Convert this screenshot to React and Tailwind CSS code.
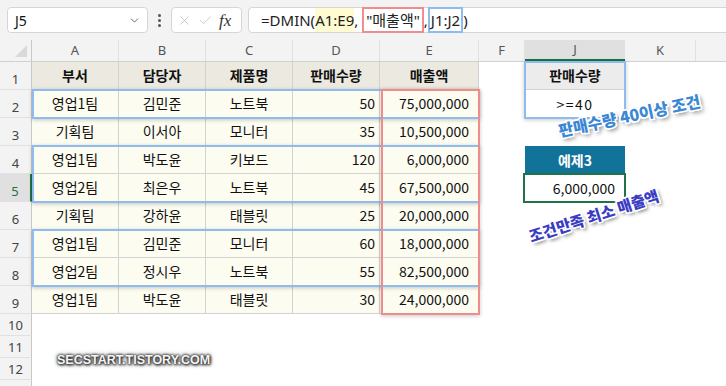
import React from 'react';
import { X, Check, ChevronDown } from 'lucide-react';

const cols = [
  { k: 'A', w: 'w-[87px]' },
  { k: 'B', w: 'w-[87px]' },
  { k: 'C', w: 'w-[87px]' },
  { k: 'D', w: 'w-[87px]' },
  { k: 'E', w: 'w-[99px]' },
];

const head = ['부서', '담당자', '제품명', '판매수량', '매출액'];

const rows = [
  ['영업1팀', '김민준', '노트북', '50', '75,000,000'],
  ['기획팀', '이서아', '모니터', '35', '10,500,000'],
  ['영업1팀', '박도윤', '키보드', '120', '6,000,000'],
  ['영업2팀', '최은우', '노트북', '45', '67,500,000'],
  ['기획팀', '강하윤', '태블릿', '25', '20,000,000'],
  ['영업1팀', '김민준', '모니터', '60', '18,000,000'],
  ['영업2팀', '정시우', '노트북', '55', '82,500,000'],
  ['영업1팀', '박도윤', '태블릿', '30', '24,000,000'],
];

const font = "font-['Noto_Sans_CJK_KR',sans-serif]";

const RowHead = ({ n, h, active }) => (
  <div
    className={`w-[32px] shrink-0 ${h} flex items-end justify-center pb-[3px] text-[13px] leading-none font-['Noto_Sans',sans-serif] border-b border-[#e1e1e1] ${
      active
        ? 'bg-[#e0e0e0] text-[#1e7145] border-r-2 border-r-[#1e7145]'
        : 'bg-[#f3f3f3] text-[#444] border-r border-r-[#c8c8c8]'
    }`}
  >
    {n}
  </div>
);

const JCell = ({ i }) => {
  if (i === 0)
    return (
      <div className="w-[100px] shrink-0 flex items-center justify-center bg-[#ececec] font-bold border-b border-[#d4d4d4]">
        판매수량
      </div>
    );
  if (i === 1)
    return <div className="w-[100px] shrink-0 flex items-center justify-center bg-white tracking-[1.5px]">&gt;=40</div>;
  if (i === 3)
    return (
      <div className="w-[100px] shrink-0 flex items-center justify-center bg-[#11739a] text-white font-bold">
        예제3
      </div>
    );
  if (i === 4)
    return <div className="w-[100px] shrink-0 flex items-center justify-end pr-[10px] bg-white">6,000,000</div>;
  return <div className="w-[100px] shrink-0" />;
};

export default function App() {
  return (
    <div className={`relative w-[726px] h-[386px] overflow-hidden bg-white text-[14px] text-[#111] ${font}`}>
      {/* formula bar */}
      <div className="h-[40px] bg-[#f3f3f3] flex items-center pl-[7px]">
        <div className="w-[141px] h-[26px] shrink-0 bg-white border border-[#d6d6d6] rounded-[4px] flex items-center justify-between pl-[7px] pr-[6px] font-['Noto_Sans',sans-serif] text-[14px]">
          J5
          <ChevronDown size={13} strokeWidth={1.6} className="text-[#555]" />
        </div>
        <div className="w-[23px] shrink-0 flex flex-col items-center gap-[2px]">
          <span className="w-[3px] h-[3px] rounded-full bg-[#555]" />
          <span className="w-[3px] h-[3px] rounded-full bg-[#555]" />
          <span className="w-[3px] h-[3px] rounded-full bg-[#555]" />
        </div>
        <div className="w-[71px] h-[26px] shrink-0 bg-white border border-[#d6d6d6] rounded-[4px] flex items-center gap-[6px] pl-[5px]">
          <X size={15} strokeWidth={1.1} className="text-[#b4b4b4]" />
          <Check size={15} strokeWidth={1.1} className="text-[#b4b4b4]" />
          <span className="font-['Liberation_Serif',serif] italic text-[17px] leading-none text-[#333]">fx</span>
        </div>
        <div className="ml-[6px] w-[500px] h-[26px] shrink-0 bg-white border border-[#d6d6d6] rounded-[4px] flex items-stretch pl-[12px] font-['Noto_Sans','Noto_Sans_CJK_KR',sans-serif] text-[15px] text-[#222] whitespace-pre">
          <span className="flex items-center">=DMIN(</span>
          <span className="flex items-center bg-[#fffbd2]">A1:E9</span>
          <span className="flex items-center">, </span>
          <span className="flex items-center border-2 border-[#f08c8c] px-[2px] -my-px">"매출액"</span>
          <span className="flex items-center">,</span>
          <span className="flex items-center border-2 border-[#8ebcee] px-[1px] -my-px">J1:J2</span>
          <span className="flex items-center">)</span>
        </div>
      </div>

      {/* column headers */}
      <div className="flex h-[22px] bg-[#f3f3f3] border-b border-[#d0d0d0] text-[13px] text-[#555] font-['Noto_Sans',sans-serif]">
        <div className="w-[32px] shrink-0 border-r border-[#c8c8c8] flex items-end justify-end p-[4px]">
          <div className="w-0 h-0 border-l-[12px] border-l-transparent border-b-[12px] border-b-[#d9d9d9]" />
        </div>
        {cols.map((c) => (
          <div key={c.k} className={`${c.w} shrink-0 flex items-center justify-center border-r border-[#e0e0e0]`}>
            {c.k}
          </div>
        ))}
        <div className="w-[46px] shrink-0 flex items-center justify-center border-r border-[#e0e0e0]">F</div>
        <div className="w-[100px] shrink-0 flex items-center justify-center bg-[#e0e0e0] border-b-2 border-[#1e7145]">J</div>
        <div className="w-[71px] shrink-0 flex items-center justify-center border-r border-[#e0e0e0]">K</div>
        <div className="flex-1" />
      </div>

      {/* header row 1 */}
      <div className="flex h-[28px]">
        <RowHead n={1} h="h-[28px]" />
        {head.map((t, j) => (
          <div
            key={t}
            className={`${cols[j].w} shrink-0 flex items-center justify-center font-bold bg-[#ebe9e0] border-r border-b border-[#d2d2d2]`}
          >
            {t}
          </div>
        ))}
        <div className="w-[46px] shrink-0" />
        <JCell i={0} />
      </div>

      {/* data rows 2-9 */}
      {rows.map((r, i) => (
        <div key={i} className="flex h-[28px]">
          <RowHead n={i + 2} h="h-[28px]" active={i === 3} />
          {r.map((t, j) => (
            <div
              key={j}
              className={`${cols[j].w} shrink-0 flex items-center bg-[#fdfcf1] border-r border-b border-[#d2d2d2] ${
                j < 3 ? 'justify-center' : j === 3 ? 'justify-end pr-[4px]' : 'justify-end pr-[9px]'
              }`}
            >
              {t}
            </div>
          ))}
          <div className="w-[46px] shrink-0" />
          <JCell i={i + 1} />
        </div>
      ))}

      {/* empty rows */}
      {[10, 11, 12].map((n) => (
        <div key={n} className="flex h-[22px]">
          <RowHead n={n} h="h-[22px]" />
        </div>
      ))}
      <div className="flex h-[22px]">
        <div className="w-[32px] shrink-0 h-[22px] bg-[#f3f3f3] border-r border-[#c8c8c8]" />
      </div>

      {/* range highlight boxes */}
      <div className="absolute left-[32px] top-[89px] w-[448px] h-[30px] border-2 border-[#8ebcee] shadow-[0_1px_4px_rgba(0,0,0,0.22)]" />
      <div className="absolute left-[32px] top-[145px] w-[448px] h-[58px] border-2 border-[#8ebcee] shadow-[0_1px_4px_rgba(0,0,0,0.22)]" />
      <div className="absolute left-[32px] top-[229px] w-[448px] h-[58px] border-2 border-[#8ebcee] shadow-[0_1px_4px_rgba(0,0,0,0.22)]" />
      <div className="absolute left-[381px] top-[89px] w-[99px] h-[226px] border-2 border-[#f08c8c] shadow-[0_1px_4px_rgba(0,0,0,0.22)]" />
      <div className="absolute left-[524px] top-[61px] w-[102px] h-[58px] border-2 border-[#8ebcee] shadow-[0_1px_4px_rgba(0,0,0,0.22)]" />

      {/* active cell */}
      <div className="absolute left-[523px] top-[173px] w-[103px] h-[30px] border-2 border-[#217346]" />
      <div className="absolute left-[622px] top-[199px] w-[6px] h-[6px] bg-[#217346] border border-white" />

      {/* callouts */}
      <div className="absolute left-[557px] top-[103px] -rotate-[12deg] text-[16px] font-black whitespace-nowrap text-[#3a87d6] [text-shadow:1.5px_1.5px_0_#fff,-1.5px_-1.5px_0_#fff,1.5px_-1.5px_0_#fff,-1.5px_1.5px_0_#fff,0_1.5px_0_#fff,0_-1.5px_0_#fff,1.5px_0_0_#fff,-1.5px_0_0_#fff,2px_3px_4px_rgba(0,0,0,0.6)]">
        판매수량 40이상 조건
      </div>
      <div className="absolute left-[526px] top-[204px] -rotate-[18deg] text-[15.5px] font-black whitespace-nowrap text-[#3a3cc4] [text-shadow:1.5px_1.5px_0_#fff,-1.5px_-1.5px_0_#fff,1.5px_-1.5px_0_#fff,-1.5px_1.5px_0_#fff,0_1.5px_0_#fff,0_-1.5px_0_#fff,1.5px_0_0_#fff,-1.5px_0_0_#fff,2px_3px_4px_rgba(0,0,0,0.6)]">
        조건만족 최소 매출액
      </div>

      {/* watermark */}
      <div className="absolute left-[57px] top-[354px] font-['Liberation_Sans',sans-serif] font-bold text-[12.5px] leading-none text-[#f4f4f4] [text-shadow:0_0_2px_#333,0_0_3px_#333,0_0_5px_#555,1px_1px_3px_#000]">
        SECSTART.TISTORY.COM
      </div>
    </div>
  );
}
